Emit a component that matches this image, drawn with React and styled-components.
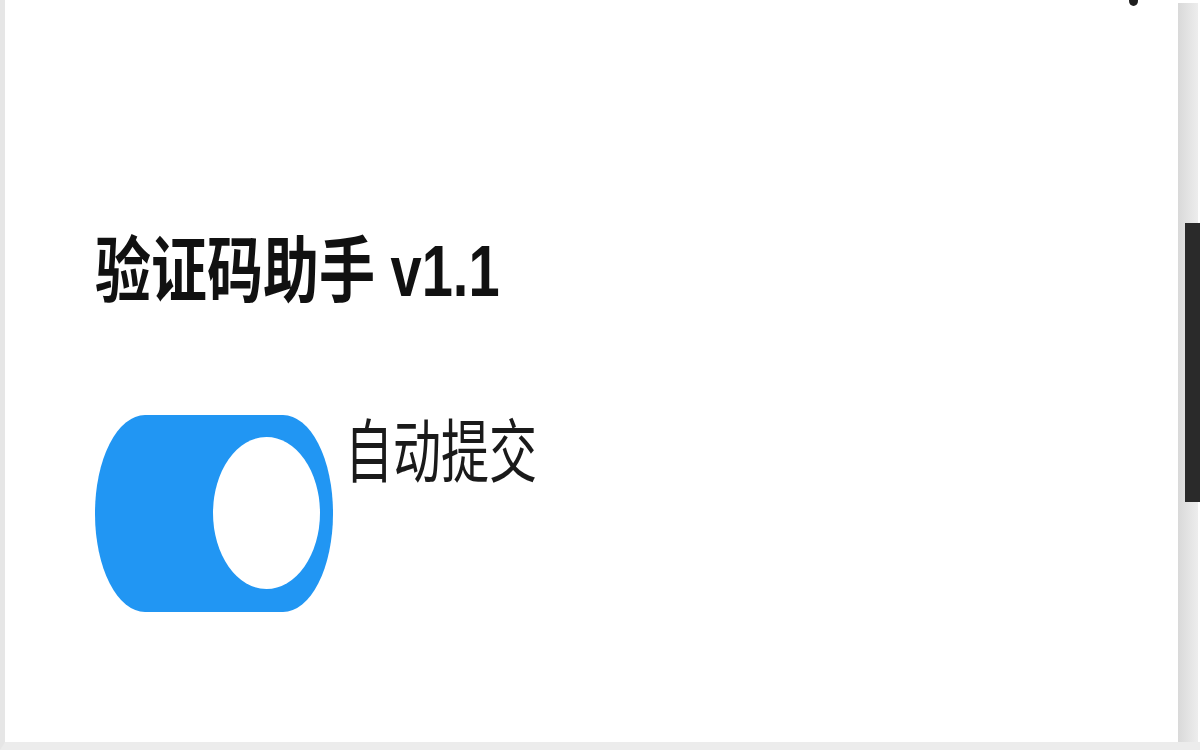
import React, { useState } from "react";
import styled, { createGlobalStyle } from "styled-components";

const Global = createGlobalStyle`
  html, body {
    margin: 0;
    padding: 0;
    background: #ffffff;
  }
  body {
    font-family: "Liberation Sans", "Noto Sans CJK SC", sans-serif;
    overflow: hidden;
  }
`;

const Window = styled.div`
  box-sizing: border-box;
  display: flex;
  width: 1200px;
  height: 750px;
  background: #ffffff;
  border-left: 5px solid #e6e6e6;
  border-bottom: 8px solid #ececec;
`;

const Content = styled.div`
  flex: 1;
  display: flex;
  flex-direction: column;
  padding-left: 90px;
`;

const TopEdge = styled.div`
  display: flex;
  justify-content: flex-end;
  height: 0;
  padding-right: 40px;
`;

const Dot = styled.span`
  width: 9px;
  height: 10px;
  margin-top: -4px;
  border-radius: 50%;
  background: #1e1e1e;
`;

const Title = styled.h1`
  margin: 236px 0 0;
  font-family: "Liberation Sans", "Noto Sans CJK SC", sans-serif;
  font-size: 56px;
  line-height: 56px;
  font-weight: 700;
  color: #111111;
  transform: scaleY(1.28);
  transform-origin: left top;
  white-space: nowrap;
`;

const Option = styled.label`
  display: flex;
  align-items: flex-start;
  gap: 12px;
  margin-top: 123px;
  cursor: pointer;
`;

const Track = styled.button`
  box-sizing: border-box;
  display: flex;
  justify-content: ${(p) => (p.$on ? "flex-end" : "flex-start")};
  width: 238px;
  height: 197px;
  padding: 22px 13px;
  border: none;
  border-radius: 50px / 98px;
  background: ${(p) => (p.$on ? "#2196f3" : "#cccccc")};
  cursor: pointer;
`;

const Knob = styled.span`
  width: 107px;
  height: 152px;
  border-radius: 50%;
  background: #ffffff;
`;

const Text = styled.span`
  margin-top: 4px;
  font-family: "Liberation Sans", "Noto Sans CJK SC", sans-serif;
  font-size: 48px;
  line-height: 48px;
  font-weight: 400;
  color: #1a1a1a;
  transform: scaleY(1.45);
  transform-origin: left top;
  white-space: nowrap;
`;

const Scrollbar = styled.div`
  box-sizing: border-box;
  width: 22px;
  padding: 3px 2px 0 0;
  display: flex;
`;

const ScrollTrack = styled.div`
  flex: 1;
  display: flex;
  flex-direction: column;
  align-items: flex-end;
  background: linear-gradient(to right, #d9d9d9, #ededed);
`;

const ScrollThumb = styled.div`
  width: 15px;
  height: 279px;
  margin-top: 220px;
  margin-right: -2px;
  background: #2a2a2a;
`;

export default function App() {
  const [autoSubmit, setAutoSubmit] = useState(true);

  return (
    <>
      <Global />
      <Window>
        <Content>
          <TopEdge>
            <Dot />
          </TopEdge>
          <Title>验证码助手 v1.1</Title>
          <Option>
            <Track
              type="button"
              role="switch"
              aria-checked={autoSubmit}
              $on={autoSubmit}
              onClick={() => setAutoSubmit(!autoSubmit)}
            >
              <Knob />
            </Track>
            <Text>自动提交</Text>
          </Option>
        </Content>
        <Scrollbar>
          <ScrollTrack>
            <ScrollThumb />
          </ScrollTrack>
        </Scrollbar>
      </Window>
    </>
  );
}
